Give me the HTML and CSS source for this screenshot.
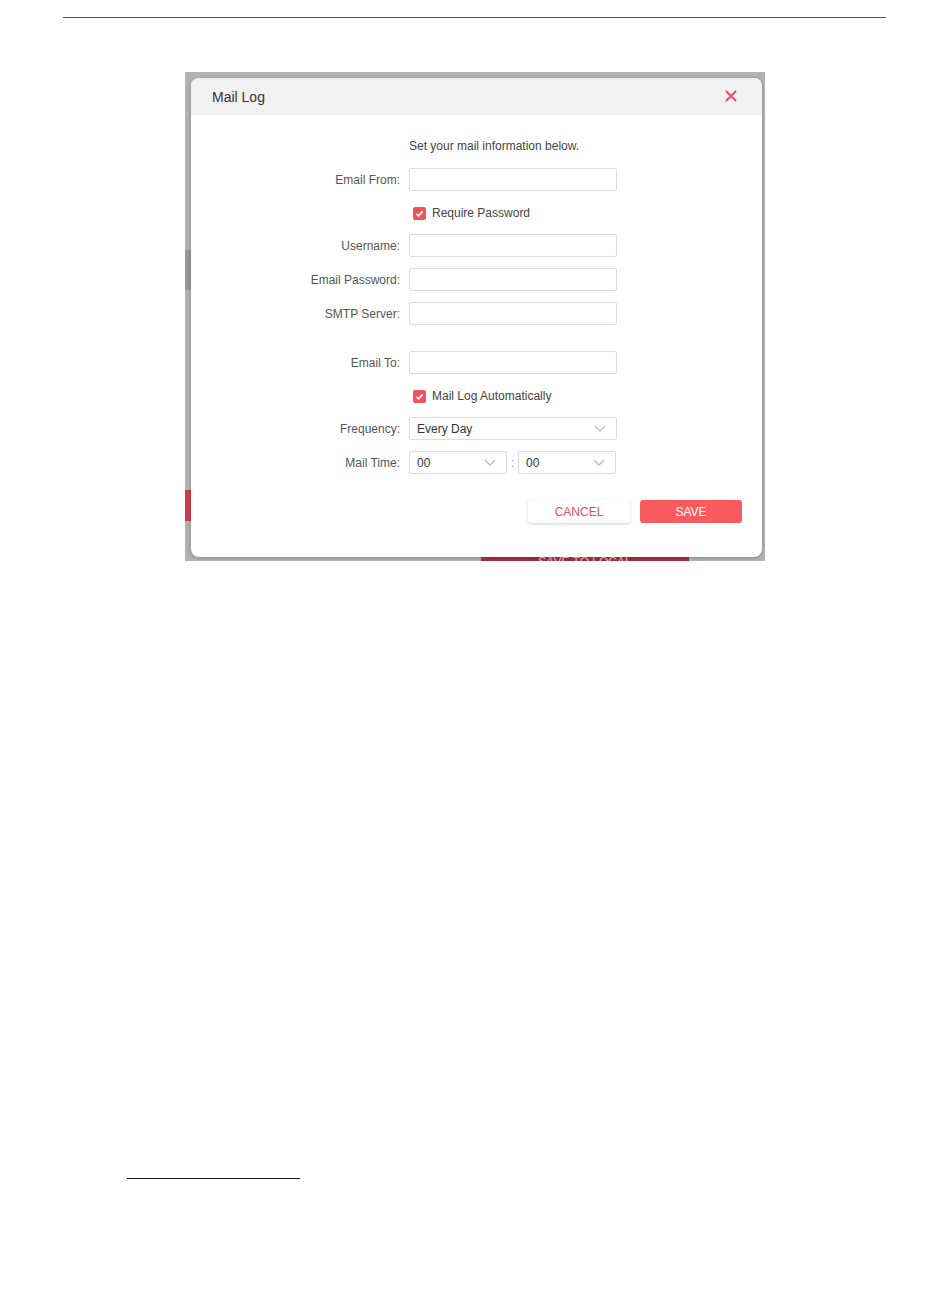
FILE: index.html
```html
<!DOCTYPE html>
<html lang="en">
<head>
  <meta charset="UTF-8">
  <title>Mail Log</title>
  <meta name="viewport" content="width=device-width, initial-scale=1.0">
  <link rel="stylesheet" href="styles.css">
</head>
<body>
  <div class="page">
    <div class="top-rule"></div>

    <div class="shot">
      <span class="bg-tab"></span>
      <span class="bg-red"></span>
      <span class="bg-save">SAVE TO LOCAL</span>

      <div class="modal">
        <div class="modal-head">
          <span class="title">Mail Log</span>
          <svg class="close" width="12" height="12" viewBox="0 0 12 12">
            <path d="M1 1 L11 11 M11 1 L1 11" stroke="#ee4f5c" stroke-width="2" fill="none"/>
          </svg>
        </div>

        <div class="modal-body">
          <p class="intro">Set your mail information below.</p>

          <div class="row">
            <label>Email From:</label>
            <input class="field" type="text">
          </div>
          <div class="row check-row">
            <span class="check"><svg width="13" height="13" viewBox="0 0 13 13"><path d="M3.5 6.8 L5.6 8.8 L9.6 4.4" stroke="#fff" stroke-width="1.6" fill="none"/></svg></span>
            <span class="check-text">Require Password</span>
          </div>
          <div class="row">
            <label>Username:</label>
            <input class="field" type="text">
          </div>
          <div class="row">
            <label>Email Password:</label>
            <input class="field" type="text">
          </div>
          <div class="row">
            <label>SMTP Server:</label>
            <input class="field" type="text">
          </div>

          <div class="row spaced">
            <label>Email To:</label>
            <input class="field" type="text">
          </div>
          <div class="row check-row">
            <span class="check"><svg width="13" height="13" viewBox="0 0 13 13"><path d="M3.5 6.8 L5.6 8.8 L9.6 4.4" stroke="#fff" stroke-width="1.6" fill="none"/></svg></span>
            <span class="check-text">Mail Log Automatically</span>
          </div>
          <div class="row">
            <label>Frequency:</label>
            <div class="select wide">
              <span>Every Day</span>
              <svg width="12" height="7" viewBox="0 0 12 7"><path d="M1 1 L6 6 L11 1" stroke="#bbb" stroke-width="1.3" fill="none"/></svg>
            </div>
          </div>
          <div class="row">
            <label>Mail Time:</label>
            <div class="time">
              <div class="select half">
                <span>00</span>
                <svg width="12" height="7" viewBox="0 0 12 7"><path d="M1 1 L6 6 L11 1" stroke="#bbb" stroke-width="1.3" fill="none"/></svg>
              </div>
              <span class="colon">:</span>
              <div class="select half">
                <span>00</span>
                <svg width="12" height="7" viewBox="0 0 12 7"><path d="M1 1 L6 6 L11 1" stroke="#bbb" stroke-width="1.3" fill="none"/></svg>
              </div>
            </div>
          </div>

          <div class="actions">
            <button class="btn cancel">CANCEL</button>
            <button class="btn save">SAVE</button>
          </div>
        </div>
      </div>
    </div>

    <div class="foot-rule"></div>
  </div>
</body>
</html>
```

FILE: styles.css
```css
* {
  box-sizing: border-box;
}
html, body {
  margin: 0;
  background: #fff;
  font-family: 'Liberation Sans', Arial, sans-serif;
  color: #333;
}
.page {
  width: 950px;
  height: 1297px;
  overflow: hidden;
}
.top-rule {
  margin: 17px 0 0 63px;
  width: 823px;
  border-top: 1px solid #555;
}
.shot {
  position: relative;
  margin: 54px 0 0 185px;
  width: 580px;
  height: 489px;
  padding: 6px 3px 4px 6px;
  background: #b3b3b3;
  overflow: hidden;
}
.bg-tab {
  position: absolute;
  left: 0;
  top: 178px;
  width: 6px;
  height: 40px;
  background: #999;
}
.bg-red {
  position: absolute;
  left: 0;
  top: 418px;
  width: 6px;
  height: 31px;
  background: #c9404c;
}
.bg-save {
  position: absolute;
  left: 296px;
  bottom: 0;
  width: 208px;
  height: 30px;
  background: #a8303f;
  color: #e9c9cc;
  font-size: 12px;
  line-height: 14px;
  text-align: center;
  padding-top: 24px;
}
.modal {
  position: relative;
  z-index: 1;
  height: 479px;
  background: #fff;
  border-radius: 8px;
  overflow: hidden;
  box-shadow: 0 1px 4px rgba(0, 0, 0, 0.25);
}
.modal-head {
  height: 37px;
  background: #f1f1f1;
  display: flex;
  align-items: center;
  justify-content: space-between;
  padding: 0 25px 0 21px;
}
.title {
  font-size: 14px;
  color: #333;
}
.close {
  margin-top: -2px;
}
.modal-body {
  padding: 23px 20px 0 0;
}
.intro {
  margin: 0 0 14px 218px;
  font-size: 12px;
  line-height: 16px;
  color: #444;
}
.row {
  display: flex;
  align-items: center;
  height: 23px;
  margin-bottom: 11px;
}
.row.spaced {
  margin-top: 26px;
}
.row.check-row {
  height: 22px;
  margin-bottom: 10px;
  padding-left: 222px;
}
.row label {
  width: 209px;
  text-align: right;
  font-size: 12px;
  color: #555;
  margin-right: 9px;
}
.field {
  width: 208px;
  height: 23px;
  border: 1px solid #dcdcdc;
  border-radius: 2px;
  background: #fff;
  padding: 0 7px;
  margin: 0;
}
.check {
  width: 13px;
  height: 13px;
  border-radius: 2px;
  background: #f0525e;
  display: flex;
  margin-right: 6px;
}
.check-text {
  font-size: 12px;
  color: #444;
}
.select {
  height: 23px;
  border: 1px solid #dcdcdc;
  border-radius: 2px;
  display: flex;
  align-items: center;
  justify-content: space-between;
  padding: 0 10px 0 7px;
  font-size: 12px;
  color: #333;
}
.select.wide {
  width: 208px;
}
.time {
  display: flex;
  align-items: center;
}
.select.half {
  width: 98px;
}
.colon {
  width: 11px;
  text-align: center;
  font-size: 12px;
  color: #999;
}
.actions {
  display: flex;
  justify-content: flex-end;
  gap: 10px;
  margin-top: 26px;
}
.btn {
  width: 102px;
  height: 23px;
  border: none;
  border-radius: 3px;
  font-family: 'Liberation Sans', Arial, sans-serif;
  font-size: 12px;
  cursor: pointer;
}
.cancel {
  background: #fff;
  color: #e84d5a;
  box-shadow: 0 1px 3px rgba(0, 0, 0, 0.2);
}
.save {
  background: #fb5a5f;
  color: #fff;
}
.foot-rule {
  margin: 617px 0 0 127px;
  width: 173px;
  border-top: 1px solid #111;
}
```
